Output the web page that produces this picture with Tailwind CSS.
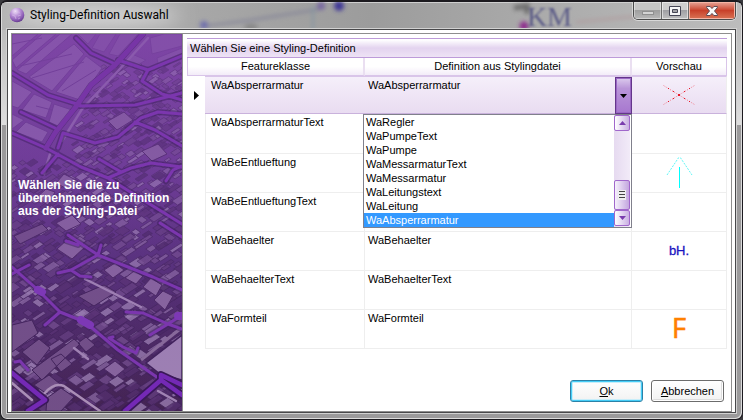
<!DOCTYPE html>
<html lang="de">
<head>
<meta charset="utf-8">
<meta name="viewport" content="width=device-width, initial-scale=1">
<title>Styling-Definition Auswahl</title>
<script src="https://cdn.jsdelivr.net/npm/@tailwindcss/browser@4"></script>
</head>
<body class="min-h-screen flex flex-col bg-[#3a3a3e] font-['Liberation_Sans',Arial,sans-serif] text-[11px] leading-[13px] text-black">
<div class="relative flex-1 flex flex-col rounded-[7px] border border-t-2 border-[#1c1a1f] bg-[#9b9a9b] overflow-hidden px-[6px] pb-[6px] shadow-[inset_0_1px_0_#cfcfcf,inset_1px_0_0_#dcdcdc,inset_-1px_-1px_0_#dcdcdc]">
  <!-- glass frame -->
  <div class="absolute inset-x-px top-px h-[122px] bg-linear-to-b from-[#b4b4b4] to-[#dedede]" aria-hidden="true"></div>
  <div class="absolute inset-x-px top-px h-[27px] bg-linear-to-r from-[#b4b4b4] via-[#9c9c9c] to-[#bcbcbc]" aria-hidden="true"></div>
  <svg class="absolute left-0 top-0 w-full h-[28px]" viewBox="0 0 741 28" preserveAspectRatio="none" aria-hidden="true">
    <defs><filter id="soft" x="-50%" y="-50%" width="200%" height="200%"><feGaussianBlur stdDeviation="2"/></filter>
    <filter id="wide" x="-50%" y="-80%" width="200%" height="260%"><feGaussianBlur stdDeviation="9"/></filter></defs>
    <ellipse cx="95" cy="14" rx="85" ry="9" fill="#dadada" filter="url(#wide)"/>
    <g filter="url(#soft)">
      <path d="M205 24 L250 18 L320 7" stroke="#808096" stroke-width="2" fill="none"/>
      <path d="M312 4V28" stroke="#8395a2" stroke-width="2"/>
      <circle cx="203" cy="23" r="4" fill="#7070ac"/><ellipse cx="250" cy="25" rx="7" ry="3" fill="#858585"/>
      <circle cx="338" cy="4" r="5" fill="#3f3797"/><circle cx="320" cy="4" r="4" fill="#7868a0"/>
      <path d="M513 6L526 4V12" stroke="#6c6c6c" stroke-width="5" fill="none"/>
      <circle cx="523" cy="24" r="4.500" fill="#8d2a8c"/>
      <path d="M575 20L640 14" stroke="#b09a9c" stroke-width="2"/>
    </g>
  </svg>

  <header class="relative h-[27px] flex items-start justify-between pl-[2px]">
    <div class="flex items-center gap-[5px] h-[26px]">
      <svg class="w-4 h-4" viewBox="0 0 16 16" aria-hidden="true">
        <defs><radialGradient id="orb" cx=".38" cy=".25" r=".8"><stop offset="0" stop-color="#f0e2f8"/><stop offset=".4" stop-color="#bb93d8"/><stop offset=".75" stop-color="#8b5cb4"/><stop offset="1" stop-color="#5c3485"/></radialGradient></defs>
        <circle cx="8" cy="8" r="7.3" fill="url(#orb)"/>
        <path d="M4 3.5l2 2 3-1 2 2M3 8l3 1 1 3M9 9l3-1M9 12l2-1" stroke="#d9bfea" stroke-width=".8" fill="none" opacity=".7"/>
      </svg>
      <h1 class="font-['Roboto','Noto_Sans',sans-serif] text-[12px] leading-4">Styling-Definition Auswahl</h1>
    </div>
    <span class="ml-auto mr-[61px] mt-px font-['Liberation_Serif',serif] text-[28px] leading-[28px] text-[#4a4a80]/80 blur-[1px]" aria-hidden="true">KM</span>
    <div class="flex h-[18px] rounded-b-[5px] border border-t-0 border-[#4b4b4b] overflow-hidden shadow-[0_0_0_1px_#d8d8d8]">
      <button type="button" aria-label="Minimieren" class="w-7 flex justify-center items-center border-r border-[#6b6b6b] bg-linear-to-b from-[#c6c6c6] from-50% via-[#9f9f9f] via-50% to-[#b8b8b8] shadow-[inset_0_0_0_1px_#ffffff66]">
        <svg class="w-3 h-3" viewBox="0 0 12 12"><rect x=".5" y="6.5" width="11" height="3" fill="#d4d4d4" stroke="#909090"/></svg>
      </button>
      <button type="button" aria-label="Maximieren" class="w-[27px] flex justify-center items-center border-r border-[#6b6b6b] bg-linear-to-b from-[#cecece] from-50% via-[#a0a0a4] via-50% to-[#c0c0c0] shadow-[inset_0_0_0_1px_#ffffff88]">
        <svg class="w-3 h-[10px]" viewBox="0 0 12 10"><path fill="#f6f6f6" stroke="#464655" fill-rule="evenodd" d="M.5.5h11v9H.5zM3.5 3.5v3h5v-3z"/></svg>
      </button>
      <button type="button" aria-label="Schließen" class="w-[46px] flex justify-center items-center bg-linear-to-b from-[#e5a397] from-0% via-[#c8402a] via-50% to-[#d97355] shadow-[inset_0_0_0_1px_#f5b5a5]">
        <svg class="w-3 h-[10px]" viewBox="0 0 12 11" preserveAspectRatio="none"><path fill="#f8f8f8" stroke="#54444f" stroke-linejoin="round" d="M.7.5h3.400L6 2.800 7.900.5h3.400v1.300L8.500 5.500l2.800 3.700v1.300H7.900L6 8.200 4.100 10.500H.7V9.200L3.500 5.500.7 1.800z"/></svg>
      </button>
    </div>
  </header>

  <main class="relative flex-1 flex bg-white border border-[#48484a] shadow-[0_0_0_1px_#d2d2d2] px-[3px] pt-[3px]">
    <div class="flex-1 flex border border-[#8e8e8e]">
      <aside class="relative w-[171px] shrink-0 overflow-hidden border-r border-[#8e8e8e] bg-[#5f3486] flex items-center px-[6px]">
        <svg class="absolute inset-0 w-full h-full" viewBox="0 0 170 377" preserveAspectRatio="xMidYMid slice" aria-hidden="true">
          <defs>
            <linearGradient id="ground" x2="0" y2="1"><stop offset="0" stop-color="#7c45a2"/><stop offset=".35" stop-color="#6b3a92"/><stop offset=".6" stop-color="#55307a"/><stop offset="1" stop-color="#42234f"/></linearGradient>
            <linearGradient id="haze" x2="0" y2="1"><stop offset="0" stop-color="#7f45a8" stop-opacity=".6"/><stop offset=".4" stop-color="#7440a0" stop-opacity=".35"/><stop offset=".7" stop-color="#643689" stop-opacity=".15"/><stop offset="1" stop-color="#50286e" stop-opacity=".1"/></linearGradient>
          </defs>
          <rect width="170" height="377" fill="url(#ground)"/>
          <g id="houses" stroke="#3f2258" stroke-width=".8"></g>
          <g fill="#9168b0" stroke="#673a8c" stroke-width="1">
            <path d="M0 0H26L0 22zM30 0H44L4 34 0 26zM48 0H60L14 40 5 36zM62 10L72 20 40 57 17 43zM74 22L90 34 68 66 44 58zM0 47L20 58 6 74 0 72zM22 60L40 68 34 84 10 76zM42 70L60 76 46 92 37 88zM0 80L12 86 0 95zM14 88L36 98 30 108 4 98z"/>
            <path d="M0 10L30 4M8 32L60 20M20 44L72 28M50 57L84 36M24 72L40 76" fill="none"/>
            <path d="M66 0H84L76 10zM88 0H104L92 18 80 14zM108 0H126L106 22 97 20zM138 4L152 0H170V12L140 20zM120 20L134 26 124 32 112 28zM145 24L170 14V20L146 30z" opacity=".7"/>
          </g>
          <g fill="#8d6ba3" stroke="#472660" stroke-width="1">
            <path d="M96 87L112 78 121 86 105 96zM52 140L66 147 55 155 44 149zM130 117L146 110 155 120 140 127zM44 189L60 181 69 190 54 197zM45 215L56 205 73 213 60 225zM92 236L103 229 112 236 101 244zM113 244L122 237 131 242 124 250zM131 253L139 244 150 251 144 262zM142 266L151 257 161 262 153 276zM34 155L43 158 36 171 24 164zM92 335L103 327 113 335 103 343z"/>
          </g>
          <g fill="#75538a" stroke="#3f2258" stroke-width="1">
            <path d="M0 291L20 286 26 299 0 318zM10 318L27 305 38 314 25 331zM39 325L49 320 60 330 49 338zM66 309L74 303 83 311 74 318zM20 336L62 305 68 310 30 346zM66 262L92 251 104 258 82 272zM2 202L30 190 36 196 8 210z"/>
            <path d="M22 351L37 341 48 350 35 360zM35 364L49 354 62 363 49 377H34z"/>
          </g>
          <path d="M134 329L170 301V346L148 340z" fill="#a68abb" stroke="#3d2058" stroke-width="1.500"/>
          <path d="M129 326L168 295" stroke="#8e719f" stroke-width="3"/>
          <g fill="none" stroke-linecap="round">
            <path d="M73 245L129 273M146 357L164 367M62 314L76 325" stroke="#a98dbb" stroke-width="2.500"/>
            <path d="M33 359Q42 348 52 352L88 377M0 349L20 366" stroke="#b49abf" stroke-width="2.500"/>
            <path d="M136 4L106 37 70 75 50 107M38 120L32 140" stroke="#9a74b5" stroke-width="2.500"/>
          </g>
          <path d="M0 0H170V377H0z" fill="url(#haze)"/>
          <g fill="none" stroke-linejoin="round" stroke-linecap="round">
            <g stroke="#3e1e60" stroke-opacity=".5" stroke-width="6">
              <path id="net" d="M131 0L103 31 79 51 63 74 43 99 34 114M0 99L34 114 69 133 96 144 136 169 170 190M0 39L36 61 68 71M9 78L43 94M68 72L123 71 143 66 170 59M46 114L51 99 64 103 83 109 106 103 129 84 146 78 170 80M123 88L143 96 170 112M96 144L119 134 139 129 170 133M87 125L109 138M64 4L79 19 101 29M106 26L136 36 170 22M136 36L130 47 150 60 170 66M30 139L46 120M148 189L170 203M56 201L86 221 141 243 170 256M54 207L66 211M89 211L86 221 59 236 46 239M59 236L68 242 79 243M0 233L26 256 48 278 73 288 106 316 149 346 170 361M0 240L17 231M48 278L33 291M114 278L131 279 156 290 170 281M156 290L138 301M101 303L97 304 111 313 124 319 126 314M3 328L8 327 16 336M0 339L33 366 16 377M154 147L161 136 170 132M170 295L156 290"/>
            </g>
            <use href="#net" stroke="#7b36ae" stroke-width="3"/>
            <path d="M131 0L103 31 79 51 63 74 43 99 34 114" stroke="#7735a6" stroke-width="5"/>
            <path d="M26 256L30 258M69 286L78 291M166 282h8" stroke="#7d38b6" stroke-width="8"/>
            <path d="M113 377L149 346 149 341 170 351M0 339L33 366 16 377M149 346L170 361" stroke="#3a1859" stroke-width="8"/>
            <path d="M113 377L149 346 149 341 170 351M0 339L33 366 16 377M149 346L170 361" stroke="#7429b5" stroke-width="4.500"/>
          </g>
        </svg>
        <p class="relative font-bold text-[12px] leading-[13px] text-white pb-[48px]"><span class="block whitespace-nowrap">Wählen Sie die zu</span><span class="block whitespace-nowrap">übernehmenede Definition</span><span class="block whitespace-nowrap">aus der Styling-Datei</span></p>
      </aside>

      <section class="flex-1 min-w-0 flex flex-col justify-between pt-1 pl-1">
        <table class="w-full table-fixed border-separate border-spacing-0 pr-1">
          <caption class="mr-1 h-5 border-y border-[#bd9bd9] bg-linear-to-b from-white from-5% via-[#e3d3ef] via-50% to-[#eee3f5] px-[3px] py-[3px] text-left whitespace-nowrap">Wählen Sie eine Styling-Definition</caption>
          <colgroup><col class="w-[18px]"><col class="w-[160px]"><col><col class="w-[95px]"></colgroup>
          <thead>
            <tr class="h-[18px] text-center">
              <th scope="col" colspan="2" class="p-0 font-normal border-l border-r-2 border-b border-[#d9c5e9] border-r-[#eadff1] bg-linear-to-b from-white from-50% to-[#f3ecf8]">Featureklasse</th>
              <th scope="col" class="p-0 font-normal border-r-2 border-b border-[#d9c5e9] border-r-[#eadff1] bg-linear-to-b from-white from-50% to-[#f3ecf8]">Definition aus Stylingdatei</th>
              <th scope="col" class="p-0 font-normal border-r border-b border-[#d9c5e9] bg-linear-to-b from-white from-50% to-[#f3ecf8]">Vorschau</th>
            </tr>
          </thead>
          <tbody class="align-top">
            <tr class="h-[38px]" aria-selected="true">
              <td class="p-0 align-middle"><svg class="ml-[7px] w-[5px] h-[9px]" viewBox="0 0 5 9" aria-hidden="true"><path d="M0 0L5 4.500 0 9z"/></svg></td>
              <td class="px-[6px] py-[2px] border-t border-b border-t-[#d9c5e9] border-b-[#c9b2dc] bg-linear-to-b from-[#f5effa] to-[#e9dcf1]">WaAbsperrarmatur</td>
              <td class="relative p-0 border-t border-b border-t-[#d9c5e9] border-b-[#c9b2dc] bg-linear-to-b from-[#f5effa] to-[#e9dcf1]">
                <div class="relative h-9 flex">
                  <select aria-label="Definition aus Stylingdatei" class="appearance-none flex-1 h-[17px] bg-transparent pl-[3px] py-[2px] leading-[13px] outline-none"><option>WaAbsperrarmatur</option></select>
                  <span class="w-[17px] h-[37px] border border-[#64358b] flex items-center justify-center bg-linear-to-b from-[#dccbed] from-0% via-[#b995d8] via-30% to-[#a777cf] shadow-[inset_0_0_0_1px_#9a68c4]"><svg class="w-[7px] h-1" viewBox="0 0 7 4" aria-hidden="true"><path d="M0 0H7L3.500 4z"/></svg></span>
                </div>
                <!-- open list -->
                <div class="absolute z-10 -left-[2px] right-0 top-[37px] flex border border-[#80808c] bg-white">
                  <ul role="listbox" aria-label="Definitionen" class="flex-1 leading-[14px] whitespace-nowrap">
                    <li role="option" class="px-[2px]">WaRegler</li>
                    <li role="option" class="px-[2px]">WaPumpeText</li>
                    <li role="option" class="px-[2px]">WaPumpe</li>
                    <li role="option" class="px-[2px]">WaMessarmaturText</li>
                    <li role="option" class="px-[2px]">WaMessarmatur</li>
                    <li role="option" class="px-[2px]">WaLeitungstext</li>
                    <li role="option" class="px-[2px]">WaLeitung</li>
                    <li role="option" aria-selected="true" class="px-[2px] bg-[#3399ff] text-white">WaAbsperrarmatur</li>
                  </ul>
                  <div class="w-4 mr-px flex flex-col bg-linear-to-r from-[#e6daf0] to-[#f2ebf8]">
                    <button type="button" aria-label="Nach oben" class="h-4 flex items-center justify-center rounded-[2px] border border-[#a067cb] bg-linear-to-r from-white to-[#c9afe2]"><svg class="w-[7px] h-1" viewBox="0 0 7 4"><path fill="#7a3cae" d="M0 4H7L3.500 0z"/></svg></button>
                    <div class="flex-1"></div>
                    <div class="h-[30px] flex items-center justify-center rounded-[2px] border border-[#a067cb] bg-linear-to-r from-[#f6f0fb] to-[#c3a6df]"><svg class="w-2 h-[10px]" viewBox="0 0 8 10" aria-hidden="true"><path fill="#eee" d="M0 0h8v10H0z"/><path d="M1 1.500h6M1 4.500h6M1 7.500h6" stroke="#444"/></svg></div>
                    <button type="button" aria-label="Nach unten" class="h-4 mb-px flex items-center justify-center rounded-[2px] border border-[#a067cb] bg-linear-to-r from-white to-[#c9afe2]"><svg class="w-[7px] h-1" viewBox="0 0 7 4"><path fill="#7a3cae" d="M0 0H7L3.500 4z"/></svg></button>
                  </div>
                </div>
              </td>
              <td class="p-0 align-middle border-t border-b border-r border-t-[#d9c5e9] border-b-[#c9b2dc] border-r-[#eeeeee] bg-linear-to-b from-[#f5effa] to-[#e9dcf1]">
                <svg class="mx-auto w-8 h-5" viewBox="0 0 32 20" aria-label="Absperrarmatur"><path d="M.5.5L31.500 19.500M.5 19.500L31.500.5" stroke="#f08a98" stroke-dasharray="1.200 1.300" fill="none"/><path fill="#e81828" d="M5 3h1v1H5zM10 6h1v1h-1zM15 9h2v2h-2zM21 13h1v1h-1zM26 16h1v1h-1zM5 16h1v1H5zM10 13h1v1h-1zM21 6h1v1h-1zM26 3h1v1h-1z"/></svg>
              </td>
            </tr>
            <tr class="h-10">
              <td></td>
              <td class="px-[6px] py-[2px] border-l border-r border-b border-[#eeeeee] pl-[5px]">WaAbsperrarmaturText</td>
              <td class="border-r border-b border-[#eeeeee]"></td>
              <td class="border-r border-b border-[#eeeeee]"></td>
            </tr>
            <tr class="h-[39px]">
              <td></td>
              <td class="px-[6px] py-[2px] border-l border-r border-b border-[#eeeeee] pl-[5px]">WaBeEntlueftung</td>
              <td class="border-r border-b border-[#eeeeee]"></td>
              <td class="p-0 align-middle border-r border-b border-[#eeeeee]">
                <svg class="mx-auto w-[28px] h-[32px]" viewBox="0 0 28 32" aria-label="Entlüftung"><path d="M2 18L13.500.8H15.500L27 18" fill="none" stroke="#5ff5f5" stroke-dasharray="2 1.200"/><path d="M14 10h1v21h-1z" fill="#00ffff" shape-rendering="crispEdges"/></svg>
              </td>
            </tr>
            <tr class="h-[39px]">
              <td></td>
              <td class="px-[6px] py-[2px] border-l border-r border-b border-[#eeeeee] pl-[5px]">WaBeEntlueftungText</td>
              <td class="border-r border-b border-[#eeeeee]"></td>
              <td class="border-r border-b border-[#eeeeee]"></td>
            </tr>
            <tr class="h-[39px]">
              <td></td>
              <td class="px-[6px] py-[2px] border-l border-r border-b border-[#eeeeee] pl-[5px]">WaBehaelter</td>
              <td class="px-[3px] py-[2px] border-r border-b border-[#eeeeee]">WaBehaelter</td>
              <td class="p-0 align-middle text-center border-r border-b border-[#eeeeee] text-[13px] leading-4 text-[#1a12c0] [-webkit-text-stroke:0.3px_#1a12c0]">bH.</td>
            </tr>
            <tr class="h-[39px]">
              <td></td>
              <td class="px-[6px] py-[2px] border-l border-r border-b border-[#eeeeee] pl-[5px]">WaBehaelterText</td>
              <td class="px-[3px] py-[2px] border-r border-b border-[#eeeeee]">WaBehaelterText</td>
              <td class="border-r border-b border-[#eeeeee]"></td>
            </tr>
            <tr class="h-[39px]">
              <td></td>
              <td class="px-[6px] py-[2px] border-l border-r border-b border-[#eeeeee] pl-[5px]">WaFormteil</td>
              <td class="px-[3px] py-[2px] border-r border-b border-[#eeeeee]">WaFormteil</td>
              <td class="p-0 pb-1 align-middle text-center border-r border-b border-[#eeeeee] font-['Noto_Sans',sans-serif] text-[28px] leading-7 text-[#ff8000] [-webkit-text-stroke:0.4px_#ff8000]">F</td>
            </tr>
          </tbody>
        </table>
        <div class="flex justify-end gap-2 pr-[7px] pb-[9px]">
          <button type="button" class="w-[73px] h-[22px] rounded-[3px] border border-[#2c82a8] bg-linear-to-b from-white to-[#f2f2f2] shadow-[inset_0_0_0_1px_#45cdf7,inset_0_0_0_2px_#c8eefa]"><u>O</u>k</button>
          <button type="button" class="w-[73px] h-[22px] rounded-[3px] border border-[#6c6c6c] bg-linear-to-b from-white to-[#f2f2f2] shadow-[inset_0_0_0_1px_#ffffff,inset_-1px_-1px_0_1px_#dddddd]"><u>A</u>bbrechen</button>
        </div>
      </section>
    </div>
  </main>
</div>
<script>
// Scatter roofs over the aerial view; they get larger towards the viewer.
(function () {
  var seed = 11, out = '';
  function rnd() { seed = (seed * 16807) % 2147483647; return seed / 2147483647; }
  var fills = ['#8a6aa2', '#75508f', '#654080', '#a085b6', '#583272', '#482763', '#54306e'];
  for (var y = 30; y < 390; y += 7) {
    var s = 0.8 + y / 330;
    for (var x = -8; x < 178; x += 8 * s) {
      if (y < 125 && x < 85 - y * 0.3) continue;
      var px = x + rnd() * 6, py = y + rnd() * 7, w = (3 + rnd() * 5) * s, h = (1.5 + rnd() * 3.5) * s;
      out += '<path d="M' + px + ' ' + py + 'l' + w + ' ' + (-w * 0.65) + 'l' + h + ' ' + h * 0.7 + 'l' + (-w) + ' ' + w * 0.65 + 'z" fill="' + fills[Math.floor(rnd() * 7)] + '" opacity=".8"/>';
    }
  }
  document.getElementById('houses').innerHTML = out;
})();
</script>
</body>
</html>
